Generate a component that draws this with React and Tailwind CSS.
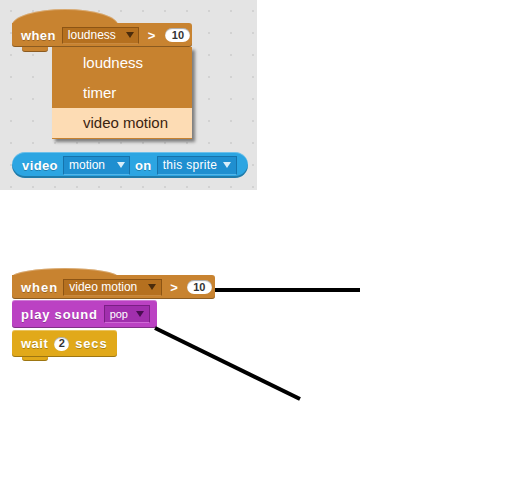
import React from "react";

const Tri = ({ c }) => (
  <span
    className={`inline-block w-0 h-0 border-l-[4px] border-r-[4px] border-t-[6px] border-l-transparent border-r-transparent ${c}`}
  />
);

const Label = ({ children, cls = "" }) => (
  <span className={`text-white font-bold text-[13px] leading-none tracking-[0.4px] [text-shadow:0_1px_0_rgba(0,0,0,0.25)] ${cls}`}>
    {children}
  </span>
);

const Oval = ({ children, w = "w-[25px]" }) => (
  <span className={`flex items-center justify-center ${w} h-[14px] rounded-full bg-white text-[#333] text-[11px] font-bold leading-none shadow-[inset_0_1px_1px_rgba(0,0,0,0.35)]`}>
    {children}
  </span>
);

export default function App() {
  return (
    <div className="relative w-[528px] h-[478px] bg-white font-['Liberation_Sans',Arial,sans-serif] overflow-hidden">
      {/* top panel */}
      <div className="relative w-[257px] h-[190px] bg-[#e4e4e4] bg-[radial-gradient(#d2d2d2_1px,transparent_1.3px)] bg-[length:22px_22px] pl-[12px] pt-[9px]">
        {/* hat block */}
        <div className="w-fit">
          <div className="w-[106px] h-[16px] -mb-[2px] bg-[#c88330] rounded-t-[50%_100%] shadow-[inset_0_1px_0_rgba(255,255,255,0.3)]" />
          <div className="flex items-center w-[180px] h-[24px] pl-[9px] bg-[#c88330] rounded-[3px] rounded-tl-none shadow-[inset_0_-1px_0_rgba(0,0,0,0.3)]">
            <Label>when</Label>
            <span className="ml-[6px] flex items-center w-[77px] h-[17px] pl-[5px] pr-[4px] bg-[#b5701f] border border-[#8c5414] border-b-[#c98a40] text-white text-[12px] leading-none">
              <span className="flex-1">loudness</span>
              <Tri c="border-t-[#4b2c0c]" />
            </span>
            <span className="ml-[9px] text-white font-bold text-[13px] leading-none">&gt;</span>
            <span className="ml-[10px]">
              <Oval>10</Oval>
            </span>
          </div>
          <div className="ml-[10px] w-[26px] h-[5px] bg-[#c88330] rounded-b-[3px] shadow-[inset_0_-1px_0_rgba(0,0,0,0.3)]" />
        </div>

        {/* video block */}
        <div className="mt-[100px] flex items-center w-[236px] h-[26px] pl-[10px] bg-[#2ca5e2] rounded-full shadow-[inset_0_1px_0_rgba(255,255,255,0.3),inset_0_-2px_0_rgba(0,0,0,0.25)]">
          <Label>video</Label>
          <span className="ml-[5px] flex items-center w-[67px] h-[19px] pl-[5px] pr-[4px] bg-[#1f8fd0] border border-[#1673ab] border-b-[#53b5e8] text-white text-[12px] leading-none">
            <span className="flex-1">motion</span>
            <Tri c="border-t-[#d8eefa]" />
          </span>
          <Label cls="ml-[5px]">on</Label>
          <span className="ml-[5px] flex items-center w-[80px] h-[19px] pl-[5px] pr-[5px] bg-[#1f8fd0] border border-[#1673ab] border-b-[#53b5e8] text-white text-[12px] leading-none tracking-[0.3px]">
            <span className="flex-1">this sprite</span>
            <Tri c="border-t-[#d8eefa]" />
          </span>
        </div>

        {/* dropdown menu */}
        <div className="absolute left-[52px] top-[47px] w-[140px] h-[92px] pt-[1px] bg-[#c7822f] shadow-[3px_3px_3px_rgba(0,0,0,0.45)]">
          <div className="h-[30px] flex items-center pl-[31px] text-white text-[15px]">loudness</div>
          <div className="h-[30px] flex items-center pl-[31px] text-white text-[15px]">timer</div>
          <div className="h-[30px] flex items-center pl-[31px] bg-[#fddcb4] text-[#3b2410] text-[15px]">video motion</div>
        </div>
      </div>

      {/* bottom script */}
      <div className="pl-[12px] pt-[78px]">
        <div className="w-fit">
          <div className="w-[106px] h-[9px] -mb-[2px] bg-[#c88330] rounded-t-[50%_100%] shadow-[inset_0_1px_0_rgba(255,255,255,0.3)]" />
          <div className="flex items-center w-[203px] h-[24px] pl-[9px] bg-[#c88330] rounded-[3px] rounded-tl-none shadow-[inset_0_-1px_0_rgba(0,0,0,0.3)]">
            <Label cls="tracking-[1px]">when</Label>
            <span className="ml-[5px] flex items-center w-[99px] h-[17px] pl-[5px] pr-[5px] bg-[#b5701f] border border-[#8c5414] border-b-[#c98a40] text-white text-[12px] leading-none">
              <span className="flex-1">video motion</span>
              <Tri c="border-t-[#4b2c0c]" />
            </span>
            <span className="ml-[8px] text-white font-bold text-[13px] leading-none">&gt;</span>
            <span className="ml-[9px]">
              <Oval>10</Oval>
            </span>
          </div>
        </div>
        <div className="mt-[1px] flex items-center w-[145px] h-[28px] pl-[9px] bg-[#bb42c3] rounded-[3px] shadow-[inset_0_1px_0_rgba(255,255,255,0.3),inset_0_-1px_0_rgba(0,0,0,0.3)]">
          <Label cls="tracking-[0.8px]">play sound</Label>
          <span className="ml-[6px] flex items-center w-[46px] h-[18px] pl-[5px] pr-[5px] bg-[#a12fad] border border-[#7a1f84] border-b-[#cf6ad6] text-white text-[11px] leading-none">
            <span className="flex-1">pop</span>
            <Tri c="border-t-[#4a0d52]" />
          </span>
        </div>
        <div className="mt-[2px] flex items-center w-[105px] h-[27px] pl-[9px] bg-[#e1a91a] rounded-[3px] shadow-[inset_0_1px_0_rgba(255,255,255,0.3),inset_0_-1px_0_rgba(0,0,0,0.3)]">
          <Label cls="tracking-[0.5px]">wait</Label>
          <span className="ml-[6px]">
            <Oval w="w-[15px]">2</Oval>
          </span>
          <Label cls="ml-[6px] tracking-[0.8px]">secs</Label>
        </div>
        <div className="ml-[10px] w-[26px] h-[4px] bg-[#e1a91a] rounded-b-[3px] shadow-[inset_0_-1px_0_rgba(0,0,0,0.3)]" />
      </div>

      {/* annotation lines */}
      <svg className="absolute inset-0 pointer-events-none" width="528" height="478">
        <line x1="215" y1="290" x2="360" y2="290" stroke="#000" strokeWidth="4" />
        <line x1="155" y1="328" x2="300" y2="399" stroke="#000" strokeWidth="4" />
      </svg>
    </div>
  );
}
